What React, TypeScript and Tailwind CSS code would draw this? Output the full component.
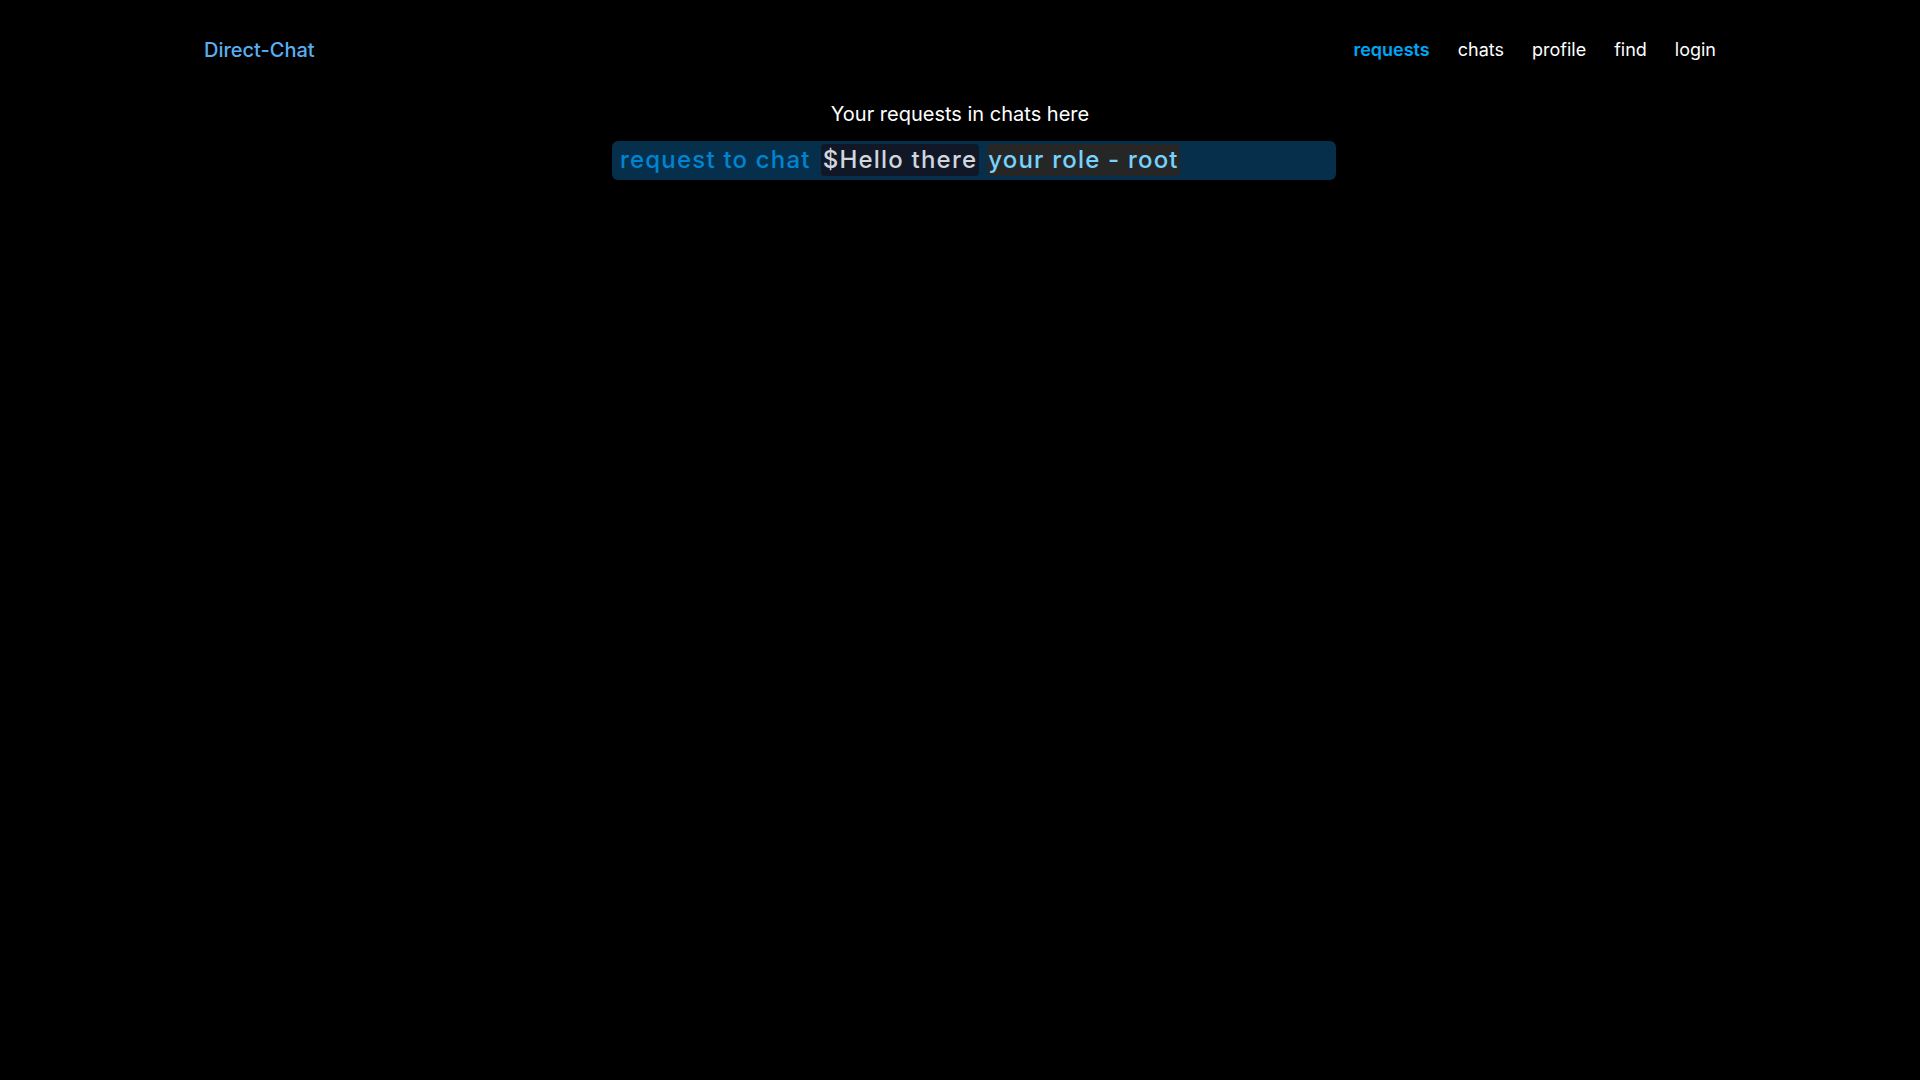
export default function App() {
  return (
    <div className="min-h-screen w-full bg-black text-white font-['Inter',sans-serif]">
      {/* Header */}
      <header className="container mx-auto px-3 py-9 flex items-center justify-between">
        <a href="#" className="text-xl font-medium text-[#5aaef0]">
          Direct-Chat
        </a>
        <nav className="flex items-center gap-7 text-lg">
          <a href="#" className="font-semibold text-sky-500">requests</a>
          <a href="#">chats</a>
          <a href="#">profile</a>
          <a href="#">find</a>
          <a href="#">login</a>
        </nav>
      </header>

      {/* Requests */}
      <main className="flex flex-col items-center">
        <h1 className="text-xl">Your requests in chats here</h1>
        <div className="mt-[13px] ml-7 w-[724px] flex items-center gap-2 rounded-md bg-sky-950 px-1 pt-[3px] pb-1 text-2xl font-medium tracking-wider">
          <span className="pl-1 pr-[2px] text-sky-600">request to chat</span>
          <span className="rounded px-[2px] bg-gray-900 text-gray-300">$Hello there</span>
          <span className="rounded px-[1px] bg-neutral-800 text-sky-300">your role - root</span>
        </div>
      </main>
    </div>
  )
}
